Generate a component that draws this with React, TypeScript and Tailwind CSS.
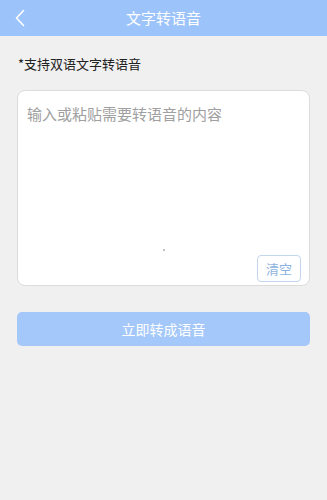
const font = { fontFamily: '"Noto Sans CJK SC", "Noto Sans", sans-serif' };

const App = () => {
  return (
    <div className="w-[327px] h-[500px] bg-[#f0f0f0] flex flex-col" style={font}>
      <div className="h-[36px] bg-[#9dc4fa] flex items-center relative shrink-0">
        <button className="absolute left-[13px] top-[8px] w-[14px] h-[20px] flex items-center justify-center">
          <svg width="10" height="18" viewBox="0 0 10 18" fill="none">
            <path d="M8.5 1.5 L1.5 9 L8.5 16.5" stroke="white" strokeWidth="1.6" strokeLinecap="round" strokeLinejoin="round" />
          </svg>
        </button>
        <h1 className="flex-1 text-center text-white text-[15px] leading-none pb-[1px]">文字转语音</h1>
      </div>

      <div className="px-[17px] pt-[19px]">
        <p className="text-[13px] text-[#222] leading-[18px] pl-[1px]">*支持双语文字转语音</p>

        <div className="mt-[17px] h-[196px] bg-white rounded-[8px] border border-[#dcdcdc] flex flex-col relative">
          <textarea
            className="flex-1 resize-none outline-none px-[9px] pt-[13px] text-[15px] leading-[20px] placeholder-[#a0a0a0] bg-transparent rounded-[8px]"
            placeholder="输入或粘贴需要转语音的内容"
            style={font}
          />
          <span className="absolute left-[145px] top-[158px] w-[2px] h-[2px] bg-[#aaa] rounded-full" />
          <div className="flex justify-end pr-[8px] pb-[3px]">
            <button className="w-[44px] h-[27px] border border-[#c3d6ee] rounded-[4px] text-[13px] text-[#8db2e0] flex items-center justify-center">
              清空
            </button>
          </div>
        </div>

        <button className="mt-[26px] w-full h-[34px] rounded-[5px] bg-[#a5c8fa] text-white text-[14px] flex items-center justify-center">
          立即转成语音
        </button>
      </div>
    </div>
  );
};

export default App;
